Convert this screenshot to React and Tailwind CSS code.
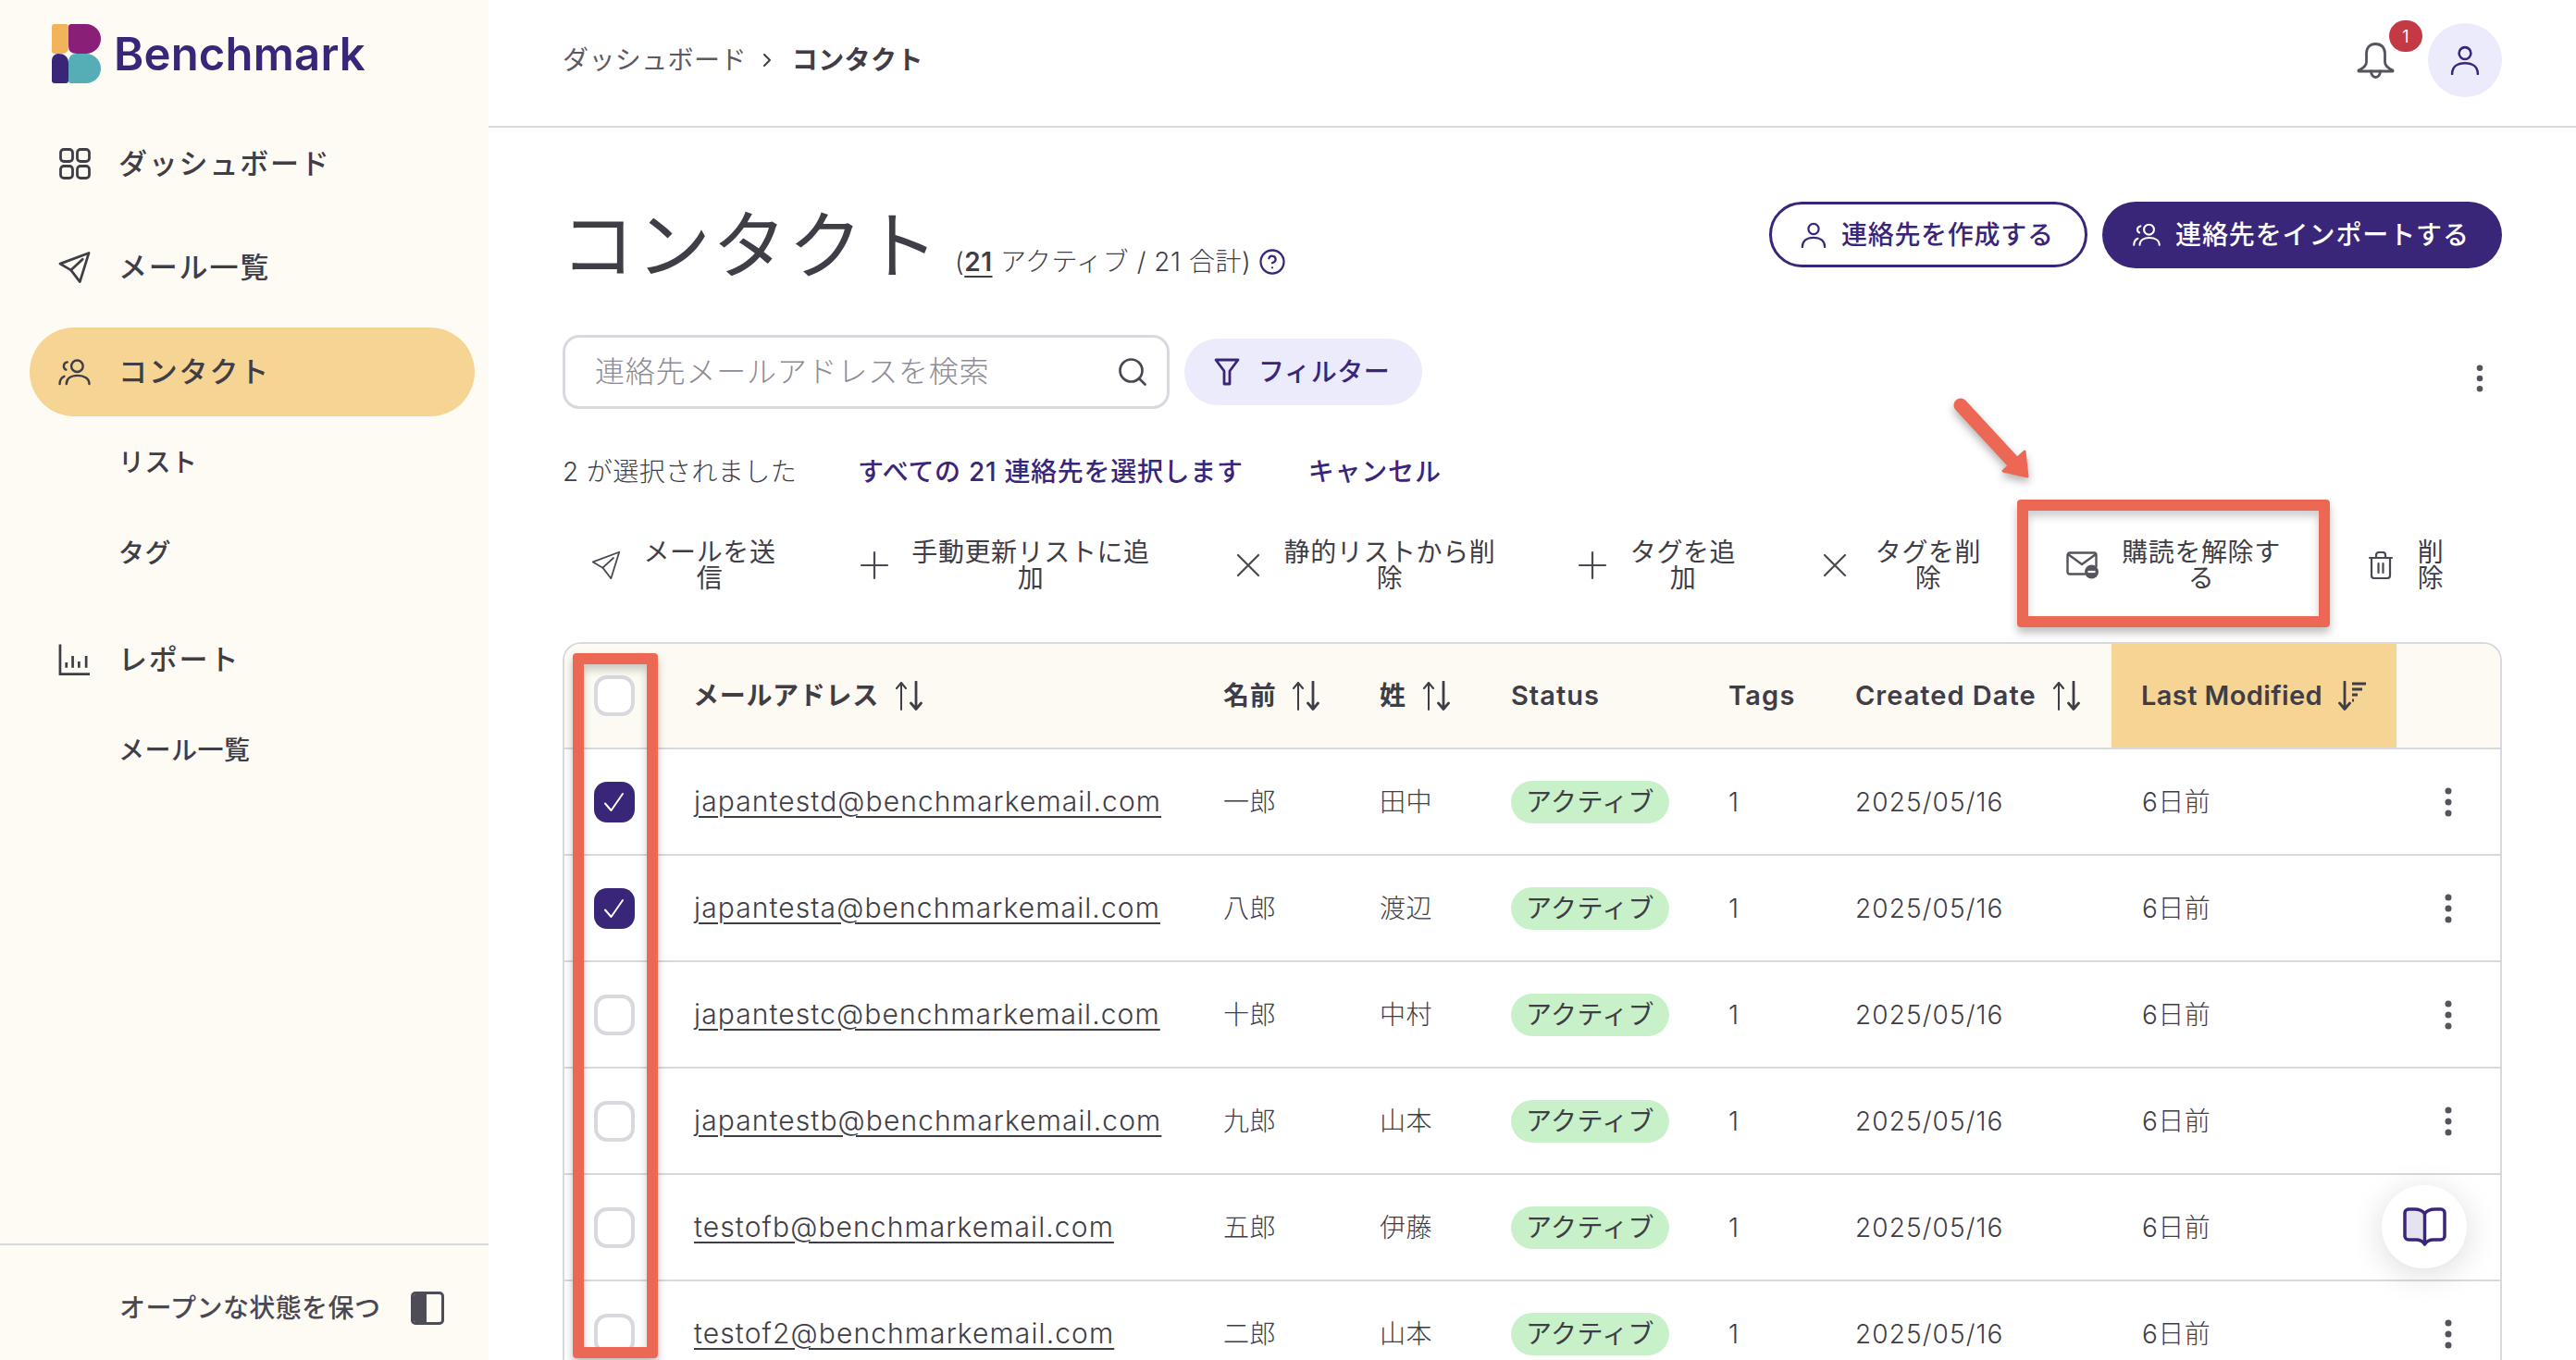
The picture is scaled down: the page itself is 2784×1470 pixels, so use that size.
import React from "react";
import { Search, CircleHelp, ChevronRight } from "lucide-react";

const Svg = ({ className, vb, children, sw = 2.5, stroke = "currentColor" }) => (
  <svg className={className} viewBox={vb} fill="none" stroke={stroke} strokeWidth={sw} strokeLinecap="round" strokeLinejoin="round">
    {children}
  </svg>
);

const Logo = () => (
  <svg className="w-[53px] h-[64px] shrink-0" viewBox="0 0 53 64">
    <path d="M3 0h12a3 3 0 0 1 3 3v22q0 7-7 7H3a3 3 0 0 1-3-3V3a3 3 0 0 1 3-3z" fill="#f1b45a" />
    <path d="M21 0h16a16 16 0 0 1 16 16v0a16 16 0 0 1-16 16H27q-9 0-9-8V3a3 3 0 0 1 3-3z" fill="#8a1f78" />
    <path d="M7 32c6 0 11 3 11 10v19a3 3 0 0 1-3 3H3a3 3 0 0 1-3-3V39a7 7 0 0 1 7-7z" fill="#3a2679" />
    <path d="M27 32h10a16 16 0 0 1 16 16v0a16 16 0 0 1-16 16H21a3 3 0 0 1-3-3V41q0-9 9-9z" fill="#55adb5" />
  </svg>
);

const GridIcon = ({ className }) => (
  <Svg className={className} vb="0 0 34 34" sw={2.8}>
    <rect x="1.500" y="1.500" width="13" height="13" rx="3.500" />
    <rect x="19.500" y="1.500" width="13" height="13" rx="3.500" />
    <rect x="1.500" y="19.500" width="13" height="13" rx="3.500" />
    <rect x="19.500" y="19.500" width="13" height="13" rx="3.500" />
  </Svg>
);
const PlaneIcon = ({ className, sw = 2.8 }) => (
  <Svg className={className} vb="0 0 36 36" sw={sw}>
    <path d="M2 14 34 2 24 34 14 21Z" />
    <path d="M14 21 27 9" />
  </Svg>
);
const UsersIcon = ({ className, sw = 2.5 }) => (
  <Svg className={className} vb="0 0 36 30" sw={sw}>
    <circle cx="21" cy="8" r="6.500" />
    <path d="M9 28c0-6 5-9.500 12.500-9.500S34.500 22 34.500 28" />
    <path d="M10 3.500a4.500 4.500 0 0 0-1.500 8.500" />
    <path d="M1.500 28c0-4 1.500-7 5-8.500" />
  </Svg>
);
const UserIcon = ({ className, sw = 2.4 }) => (
  <Svg className={className} vb="0 0 30 30" sw={sw}>
    <circle cx="15" cy="8" r="6" />
    <path d="M2 29c0-7 5-11 13-11s13 4 13 11" />
  </Svg>
);
const ChartIcon = ({ className }) => (
  <Svg className={className} vb="0 0 36 36" sw={2.8}>
    <path d="M2 1v33h33" strokeLinecap="butt" strokeLinejoin="miter" />
    <path d="M9 21v6M16 14v13M23 20v7M31 14v13" strokeLinecap="butt" />
  </Svg>
);
const BellIcon = ({ className }) => (
  <Svg className={className} vb="0 0 41 39" sw={2.8}>
    <path d="M20.500 1.500C14 1.500 10.500 6 10.500 12v9c0 4-3 6.500-8.500 9v1h37v-1c-5.500-2.500-8.500-5-8.500-9v-9c0-6-3.500-10.500-10-10.500Z" />
    <path d="M15.500 31a5 6.500 0 0 0 10 0" />
  </Svg>
);
const FilterIcon = ({ className }) => (
  <Svg className={className} vb="0 0 28 30" sw={2.8}>
    <path d="M2 2h24L17 14v14h-6V14Z" />
  </Svg>
);
const PlusIcon = ({ className }) => (
  <Svg className={className} vb="0 0 36 36" sw={2.2}>
    <path d="M18 4v28M4 18h28" />
  </Svg>
);
const XIcon = ({ className }) => (
  <Svg className={className} vb="0 0 36 36" sw={2.2}>
    <path d="M7 7l22 22M29 7 7 29" />
  </Svg>
);
const MailMinusIcon = ({ className }) => (
  <svg className={className} viewBox="0 0 36 30" fill="none">
    <path d="M20 24.500H4a2.500 2.500 0 0 1-2.500-2.500V4A2.500 2.500 0 0 1 4 1.500h26A2.500 2.500 0 0 1 32.500 4v12M2 3l15 11L32 3" stroke="#55535c" strokeWidth="2.400" strokeLinejoin="round" strokeLinecap="round" />
    <circle cx="27.500" cy="22" r="7.500" fill="#55535c" />
    <path d="M23.500 22h8" stroke="#fff" strokeWidth="2.200" />
  </svg>
);
const TrashIcon = ({ className }) => (
  <Svg className={className} vb="0 0 30 30" sw={2.2}>
    <path d="M3 7h24M5 7v19a3 3 0 0 0 3 3h14a3 3 0 0 0 3-3V7M10 7V4a3 3 0 0 1 3-3h4a3 3 0 0 1 3 3v3M12.500 13v10M17.500 13v10" />
  </Svg>
);
const SortIcon = () => (
  <Svg className="w-[32px] h-[32px] shrink-0" vb="0 0 32 32" sw={2.4}>
    <path d="M8 31V2M3 8l5-6 5 6" strokeWidth="2" />
    <path d="M24 1v29M18.500 24l5.500 6.500 5.500-6.500" strokeWidth="2.800" />
  </Svg>
);
const SortDescIcon = () => (
  <Svg className="w-[32px] h-[32px] shrink-0" vb="0 0 32 32" sw={2.8}>
    <path d="M8 1v29M2.500 24 8 30.500 13.500 24" />
    <path d="M16 3h15M16 9h11M16 15h6M16 21h2" strokeLinecap="butt" />
  </Svg>
);
const Kebab = ({ className }) => (
  <svg className={className} viewBox="0 0 8 32" fill="#55535c">
    <circle cx="4" cy="4" r="3.500" />
    <circle cx="4" cy="16" r="3.500" />
    <circle cx="4" cy="28" r="3.500" />
  </svg>
);
const Check = () => (
  <Svg className="w-[24px] h-[24px] text-white" vb="0 0 24 24" sw={2}>
    <path d="M2 13.500 8.500 21 21 3" />
  </Svg>
);
const BookIcon = () => (
  <svg className="w-[47px] h-[43px]" viewBox="0 0 47 43">
    <path d="M23.500 7C21 3 17 2 12 2H6a4 4 0 0 0-4 4v25a4 4 0 0 0 4 4h8c4 0 7 1 9.500 4Z" fill="#e6e3f0" />
    <path d="M23.500 7C21 3 17 2 12 2H6a4 4 0 0 0-4 4v25a4 4 0 0 0 4 4h8c4 0 7 1 9.500 5 2.500-4 5.500-5 9.500-5h8a4 4 0 0 0 4-4V6a4 4 0 0 0-4-4h-6c-5 0-9 1-11.500 5ZM23.500 7v33" fill="none" stroke="#3a2679" strokeWidth="3.500" strokeLinejoin="round" />
  </svg>
);

const NavItem = ({ icon, label, active, className = "" }) => (
  <div className={`flex items-center h-[96px] pl-[32px] rounded-[48px] gap-[30px] text-[31px] font-medium tracking-[1.800px] ${active ? "bg-[#f6d493]" : ""} ${className}`}>
    <span className="w-[35px] flex justify-center shrink-0 -ml-[1px]">{icon}</span>
    <span>{label}</span>
  </div>
);
const SubItem = ({ label }) => (
  <div className="flex items-center h-[98px] pt-[2px] pl-[96px] text-[28px] font-medium tracking-[0.5px]">{label}</div>
);

const Sidebar = () => (
  <aside className="w-[528px] shrink-0 h-full bg-[#fefbf4] flex flex-col text-[#3f3d46]">
    <div className="flex items-center gap-[14px] pl-[56px] pt-[26px] h-[90px]">
      <Logo />
      <span className="text-[49px] leading-none font-semibold text-[#3a2679] tracking-[0.2px]">Benchmark</span>
    </div>
    <nav className="flex flex-col pl-[32px] pr-[15px] mt-[39px]">
      <NavItem icon={<GridIcon className="w-[34px] h-[34px]" />} label="ダッシュボード" />
      <NavItem className="mt-[16px]" icon={<PlaneIcon className="w-[36px] h-[36px]" />} label="メール一覧" />
      <NavItem className="mt-[17px]" active icon={<UsersIcon className="w-[35px] h-[29px]" />} label="コンタクト" />
      <SubItem label="リスト" />
      <SubItem label="タグ" />
      <NavItem className="mt-[19px]" icon={<ChartIcon className="w-[36px] h-[36px]" />} label="レポート" />
      <SubItem label="メール一覧" />
    </nav>
    <div className="mt-auto h-[126px] border-t-2 border-[#d9d8df] flex items-center pt-[12px] pl-[129px] gap-[33px] text-[28px] font-medium tracking-[0.4px] text-[#4a4852]">
      <span>オープンな状態を保つ</span>
      <span className="w-[36px] h-[36px] rounded-[5px] border-[3px] border-[#4e4c56] flex overflow-hidden">
        <span className="w-[14px] bg-[#4e4c56]" />
      </span>
    </div>
  </aside>
);

const Header = () => (
  <header className="h-[138px] shrink-0 border-b-2 border-[#d9d8df] flex items-center justify-between px-[80px] pb-[6px] text-[28px] tracking-[0.4px]">
    <div className="flex items-center text-[#5b5963]">
      <span>ダッシュボード</span>
      <ChevronRight className="ml-[10px] mr-[15px] w-[24px] h-[24px] text-[#3f3d46]" strokeWidth={2} />
      <span className="font-semibold text-[#3f3d46]">コンタクト</span>
    </div>
    <div className="flex items-center gap-[36px] relative">
      <BellIcon className="w-[41px] h-[39px] text-[#55535c]" />
      <span className="absolute right-[86px] -top-[3px] w-[36px] h-[34px] rounded-full bg-[#c33a45] text-white text-[18px] flex items-center justify-center font-normal">1</span>
      <span className="w-[80px] h-[80px] rounded-full bg-[#ecebfb] flex items-center justify-center text-[#3a2679]">
        <UserIcon className="w-[32px] h-[32px]" />
      </span>
    </div>
  </header>
);

const Action = ({ icon, text, w }) => (
  <div className="flex items-center gap-[16px] shrink-0">
    <span className="w-[36px] flex justify-center shrink-0 text-[#4a4852]">{icon}</span>
    <span className={`${w} text-center text-[28px] leading-[28px] tracking-[0.6px] text-[#3f3d46]`}>{text}</span>
  </div>
);

const COLS = "grid grid-cols-[108px_573px_169px_142px_235px_137px_308px_308px_112px] items-center";

const Th = ({ children, sort, desc, en, className = "" }) => (
  <div className={`flex items-center gap-[16px] pl-[31px] h-full font-semibold ${en ? "text-[29px]" : "text-[28px] tracking-[0.7px]"} ${className}`}>
    <span>{children}</span>
    {sort && <SortIcon />}
    {desc && <SortDescIcon />}
  </div>
);

const Box = ({ checked }) =>
  checked ? (
    <span className="w-[44px] h-[44px] rounded-[14px] bg-[#3a2679] flex items-center justify-center"><Check /></span>
  ) : (
    <span className="w-[44px] h-[44px] rounded-[14px] border-[4px] border-[#d9d8df] bg-white block" />
  );

const rows = [
  ["japantestd@benchmarkemail.com", "一郎", "田中", true],
  ["japantesta@benchmarkemail.com", "八郎", "渡辺", true],
  ["japantestc@benchmarkemail.com", "十郎", "中村", false],
  ["japantestb@benchmarkemail.com", "九郎", "山本", false],
  ["testofb@benchmarkemail.com", "五郎", "伊藤", false],
  ["testof2@benchmarkemail.com", "二郎", "山本", false],
];

const Table = () => (
  <div className="mt-[48px] border-2 border-b-0 border-[#d9d8df] rounded-t-[20px] overflow-hidden text-[#3f3d46]">
    <div className={`${COLS} h-[114px] bg-[#fdfaf3] border-b-2 border-[#d9d8df]`}>
      <div className="flex justify-center"><Box /></div>
      <Th sort>メールアドレス</Th>
      <Th sort>名前</Th>
      <Th sort>姓</Th>
      <Th en className="tracking-[1px]">Status</Th>
      <Th en className="tracking-[1.200px]">Tags</Th>
      <Th en sort className="tracking-[1px]">Created Date</Th>
      <Th en desc className="bg-[#f6d493] pl-[32px] tracking-[0.4px]">Last Modified</Th>
      <div />
    </div>
    {rows.map(([email, first, last, checked]) => (
      <div key={email} className={`${COLS} h-[115px] border-b-2 border-[#d9d8df] text-[28px] font-light tracking-[0.4px]`}>
        <div className="flex justify-center"><Box checked={checked} /></div>
        <div className="pl-[32px] text-[30px] underline decoration-2 underline-offset-[5px] tracking-[1.100px]">{email}</div>
        <div className="pl-[31px]">{first}</div>
        <div className="pl-[31px]">{last}</div>
        <div className="pl-[31px]">
          <span className="inline-flex items-center justify-center w-[171px] h-[46px] rounded-[23px] bg-[#c8f1c9] font-normal">アクティブ</span>
        </div>
        <div className="pl-[31px]">1</div>
        <div className="pl-[31px] tracking-[1.100px]">2025/05/16</div>
        <div className="pl-[33px]">6日前</div>
        <div className="flex justify-center"><Kebab className="w-[8px] h-[32px]" /></div>
      </div>
    ))}
  </div>
);

const Main = () => (
  <main className="flex-1 min-w-0 h-full flex flex-col">
    <Header />
    <div className="px-[80px] flex flex-col">
      <div className="flex justify-between items-start pt-[80px]">
        <div className="flex items-center h-[90px] text-[#3f3d46]">
          <h1 className="text-[80px] leading-[90px] pt-[4px] font-normal tracking-[2px] -ml-[2px]">コンタクト</h1>
          <span className="ml-[16px] mt-[40px] text-[28px] font-light tracking-[0.5px]">
            (<span className="font-semibold underline decoration-2 underline-offset-[5px]">21</span> アクティブ / 21 合計)
          </span>
          <CircleHelp className="w-[30px] h-[30px] ml-[8px] mt-[40px] text-[#3a2679]" strokeWidth={1.8} />
        </div>
        <div className="flex gap-[16px]">
          <button className="h-[71px] w-[344px] rounded-[36px] border-[3px] border-[#3a2679] text-[#3a2679] flex items-center pl-[31px] gap-[16px] text-[28px] font-medium tracking-[0.7px]">
            <UserIcon className="w-[28px] h-[28px]" />
            連絡先を作成する
          </button>
          <button className="h-[72px] w-[432px] rounded-[36px] bg-[#3a2679] text-white flex items-center pl-[33px] gap-[16px] text-[28px] font-medium tracking-[0.9px]">
            <UsersIcon className="w-[30px] h-[26px]" />
            連絡先をインポートする
          </button>
        </div>
      </div>

      <div className="flex items-center mt-[54px] h-[80px]">
        <div className="w-[656px] h-[80px] rounded-[18px] border-[3px] border-[#d9d8df] flex items-center justify-between pl-[32px] pr-[19px] shrink-0">
          <span className="text-[32px] font-light text-[#8d8b95] tracking-[0.8px]">連絡先メールアドレスを検索</span>
          <Search className="w-[36px] h-[36px] text-[#4a4852]" strokeWidth={1.8} />
        </div>
        <button className="ml-[16px] w-[257px] h-[72px] rounded-[36px] bg-[#ecebfb] text-[#3a2679] flex items-center pl-[32px] gap-[20px] text-[28px] font-medium tracking-[0.6px]">
          <FilterIcon className="w-[28px] h-[30px]" />
          フィルター
        </button>
        <Kebab className="ml-auto mr-[20px] mt-[14px] w-[8px] h-[30px]" />
      </div>

      <div className="flex items-center h-[40px] mt-[48px] text-[28px] tracking-[0.4px]">
        <span className="font-light text-[#3f3d46]">2 が選択されました</span>
        <span className="ml-[66px] font-medium text-[#3a2679] tracking-[0.7px]">すべての 21 連絡先を選択します</span>
        <span className="ml-[70px] font-medium text-[#3a2679] tracking-[0.8px]">キャンセル</span>
      </div>

      <div className="flex items-center h-[70px] mt-[46px] pl-[29px] gap-[82px]">
        <Action w="w-[156px]" text="メールを送信" icon={<PlaneIcon className="w-[32px] h-[32px]" sw={2} />} />
        <Action w="w-[270px]" text="手動更新リストに追加" icon={<PlusIcon className="w-[36px] h-[36px]" />} />
        <Action w="w-[238px]" text="静的リストから削除" icon={<XIcon className="w-[36px] h-[36px]" />} />
        <Action w="w-[128px]" text="タグを追加" icon={<PlusIcon className="w-[36px] h-[36px]" />} />
        <Action w="w-[134px]" text="タグを削除" icon={<XIcon className="w-[36px] h-[36px]" />} />
        <Action w="w-[188px]" text="購読を解除する" icon={<MailMinusIcon className="w-[36px] h-[30px]" />} />
        <Action w="w-[40px]" text="削除" icon={<TrashIcon className="w-[30px] h-[30px]" />} />
      </div>

      <Table />
    </div>
  </main>
);

export default function App() {
  return (
    <div className="relative w-[2784px] h-[1470px] overflow-hidden bg-white flex font-['Inter','Noto_Sans_CJK_JP',sans-serif]">
      <Sidebar />
      <Main />

      {/* annotations */}
      <div className="absolute left-[2180px] top-[540px] w-[338px] h-[138px] rounded-[4px] border-[12px] border-[#ec6754] shadow-[0_6px_10px_rgba(0,0,0,0.25),inset_0_6px_10px_rgba(0,0,0,0.2)]" />
      <div className="absolute left-[619px] top-[706px] w-[92px] h-[762px] rounded-[4px] border-[12px] border-[#ec6754] shadow-[0_6px_10px_rgba(0,0,0,0.25),inset_0_6px_10px_rgba(0,0,0,0.2)]" />
      <svg className="absolute left-[2100px] top-[420px] w-[110px] h-[110px] drop-shadow-[0_5px_5px_rgba(0,0,0,0.3)]" viewBox="0 0 110 110">
        <path d="M19 18 80 84" stroke="#ec6754" strokeWidth="15" strokeLinecap="round" fill="none" />
        <path d="M88 68 91 95 65 89Z" fill="#ec6754" stroke="#ec6754" strokeWidth="3" strokeLinejoin="round" />
      </svg>

      {/* floating help */}
      <div className="absolute left-[2574px] top-[1281px] w-[92px] h-[90px] rounded-full bg-white shadow-[0_6px_36px_rgba(0,0,0,0.14)] flex items-center justify-center">
        <BookIcon />
      </div>
    </div>
  );
}
